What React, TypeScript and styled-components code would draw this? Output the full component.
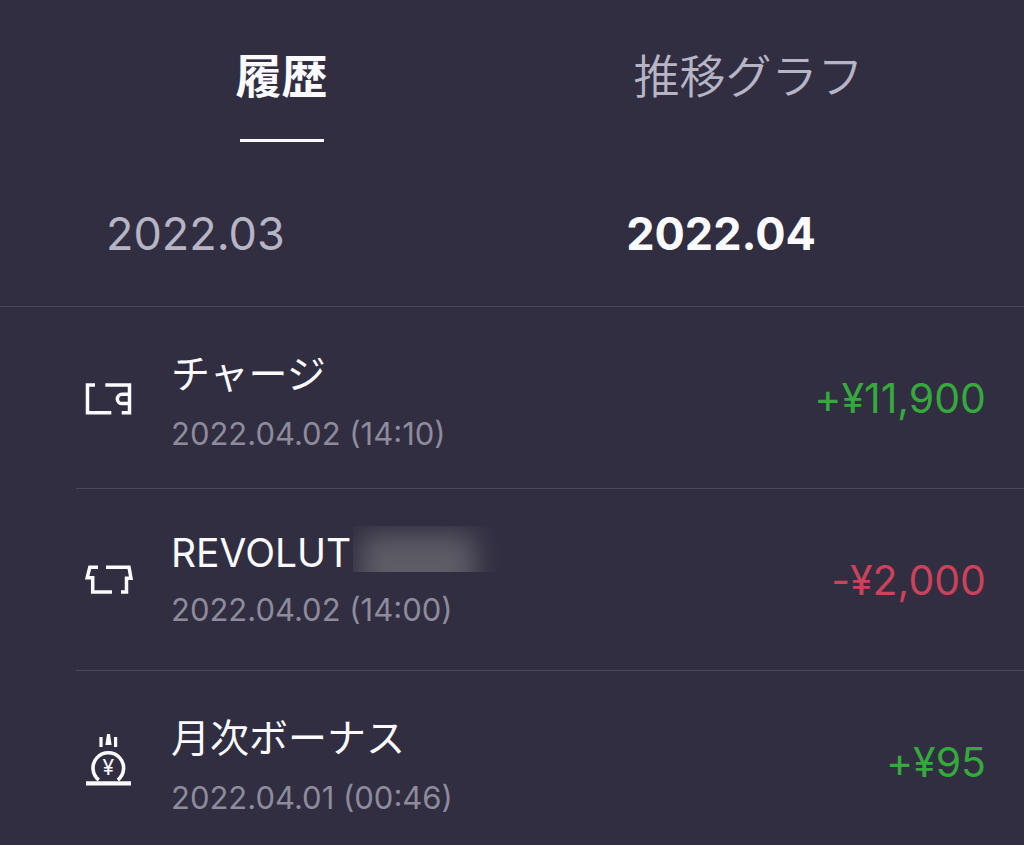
import React, { useState } from "react";
import styled, { createGlobalStyle } from "styled-components";

const colors = {
  background: "#302e40",
  line: "#4b485b",
  text: "#fbfaff",
  muted: "#b7b4c5",
  faint: "#8e8b9c",
  income: "#36a93d",
  expense: "#cb425a",
};

const GlobalStyle = createGlobalStyle`
  *, *::before, *::after { box-sizing: border-box; }
  body {
    margin: 0;
    background: ${colors.background};
    color: ${colors.text};
    font-family: Inter, "Noto Sans CJK JP", sans-serif;
  }
  button { font: inherit; color: inherit; }
`;

const Header = styled.header`
  padding: 46px 0 42px;
  border-bottom: 1px solid ${colors.line};
`;

const Tabs = styled.div`
  display: grid;
  grid-template-columns: 1fr 1fr;
  padding: 0 42px 0 48px;
`;

const Tab = styled.button<{ $active: boolean }>`
  display: flex;
  flex-direction: column;
  align-items: center;
  gap: 33px;
  padding: 0;
  border: 0;
  background: none;
  cursor: pointer;
  font-size: 46px;
  line-height: 60px;
  font-weight: ${(p) => (p.$active ? 700 : 350)};
  color: ${(p) => (p.$active ? colors.text : colors.muted)};

  &::after {
    content: "";
    width: 84px;
    height: 3px;
    background: ${(p) => (p.$active ? colors.text : "transparent")};
  }
`;

const Months = styled.nav`
  display: flex;
  justify-content: space-between;
  margin-top: 62px;
  padding: 0 208px 0 106px;
`;

const Month = styled.button<{ $active: boolean }>`
  padding: 0;
  border: 0;
  background: none;
  cursor: pointer;
  font-size: 45px;
  line-height: 60px;
  font-weight: ${(p) => (p.$active ? 700 : 400)};
  color: ${(p) => (p.$active ? colors.text : colors.muted)};
`;

const List = styled.ul`
  list-style: none;
  margin: 0 0 0 76px;
  padding: 0;
`;

const Row = styled.li`
  display: flex;
  align-items: center;
  min-height: 182px;
  padding: 0 38px 0 9px;

  &:not(:last-child) {
    border-bottom: 1px solid ${colors.line};
  }
`;

const IconBox = styled.span`
  display: flex;
  flex: none;
  width: 48px;
  margin-right: 38px;
`;

const Details = styled.div`
  flex: 1;
  align-self: flex-start;
  padding-top: 37px;
`;

const Title = styled.div<{ $latin?: boolean }>`
  display: flex;
  font-size: 39px;
  font-weight: 400;
  line-height: ${(p) => (p.$latin ? 54 : 60)}px;
`;

const Mask = styled.span`
  width: 148px;
  height: 46px;
  margin-left: 2px;
  overflow: hidden;

  &::before {
    content: "";
    display: block;
    width: 114px;
    height: 80px;
    margin: 8px 0 0 8px;
    background: #5e5d66;
    filter: blur(14px);
  }
`;

const Time = styled.time`
  display: block;
  font-size: 31px;
  line-height: 60px;
  color: ${colors.faint};
`;

const Amount = styled.span<{ $income: boolean }>`
  font-size: 41px;
  line-height: 48px;
  font-weight: 400;
  font-feature-settings: "calt" 0;
  white-space: nowrap;
  color: ${(p) => (p.$income ? colors.income : colors.expense)};
`;

const WalletIcon = () => (
  <svg width="48" height="34" viewBox="0 -2 48 34" fill="none" stroke={colors.text} strokeWidth="3.5" aria-hidden="true">
    <path d="M10 2H2.5V29.7H26.3M20.3 2H44.5V29.7H36.7" />
    <path d="M44.5 11.3H37a4.6 4.6 0 0 0 0 9.3h7.5" />
  </svg>
);

const StoreIcon = () => (
  <svg width="48" height="30" viewBox="0 0 48 30" fill="none" stroke={colors.text} strokeWidth="3.5" aria-hidden="true">
    <path d="M13 2.3H4.8L2.2 12.7H7.7V27H27M21 2.3H44L46 13.3H41.5V27H36" />
  </svg>
);

const BonusIcon = () => (
  <svg width="48" height="58" viewBox="0 0 48 58" aria-hidden="true">
    <path d="M14.4 4H17.6V14H14.4ZM29 4H32.2V14H29ZM22 1H25L26.6 12H20.4Z" fill={colors.text} />
    <path d="M13.8 47A15.3 15.3 0 1 1 32.8 47" fill="none" stroke={colors.text} strokeWidth="3.6" />
    <path d="M1 48.3H46V52.5H1Z" fill={colors.text} />
    <text x="23.3" y="42" textAnchor="middle" fontFamily="Inter, sans-serif" fontSize="21" fill={colors.text}>
      ¥
    </text>
  </svg>
);

const entries = [
  { title: "チャージ", time: "2022.04.02 (14:10)", iso: "2022-04-02T14:10", amount: "+¥11,900", income: true, Icon: WalletIcon },
  { title: "REVOLUT", time: "2022.04.02 (14:00)", iso: "2022-04-02T14:00", amount: "-¥2,000", income: false, latin: true, masked: true, Icon: StoreIcon },
  { title: "月次ボーナス", time: "2022.04.01 (00:46)", iso: "2022-04-01T00:46", amount: "+¥95", income: true, Icon: BonusIcon },
];

export default function App() {
  const [tab, setTab] = useState("履歴");
  const [month, setMonth] = useState("2022.04");

  return (
    <main lang="ja">
      <GlobalStyle />
      <Header>
        <Tabs role="tablist">
          {["履歴", "推移グラフ"].map((name) => (
            <Tab key={name} type="button" role="tab" aria-selected={tab === name} $active={tab === name} onClick={() => setTab(name)}>
              {name}
            </Tab>
          ))}
        </Tabs>
        <Months>
          {["2022.03", "2022.04"].map((name) => (
            <Month key={name} type="button" aria-pressed={month === name} $active={month === name} onClick={() => setMonth(name)}>
              {name}
            </Month>
          ))}
        </Months>
      </Header>
      <List>
        {entries.map(({ title, time, iso, amount, income, latin, masked, Icon }) => (
          <Row key={iso}>
            <IconBox>
              <Icon />
            </IconBox>
            <Details>
              <Title $latin={latin}>
                {title}
                {masked && <Mask />}
              </Title>
              <Time dateTime={iso}>{time}</Time>
            </Details>
            <Amount $income={income}>{amount}</Amount>
          </Row>
        ))}
      </List>
    </main>
  );
}
